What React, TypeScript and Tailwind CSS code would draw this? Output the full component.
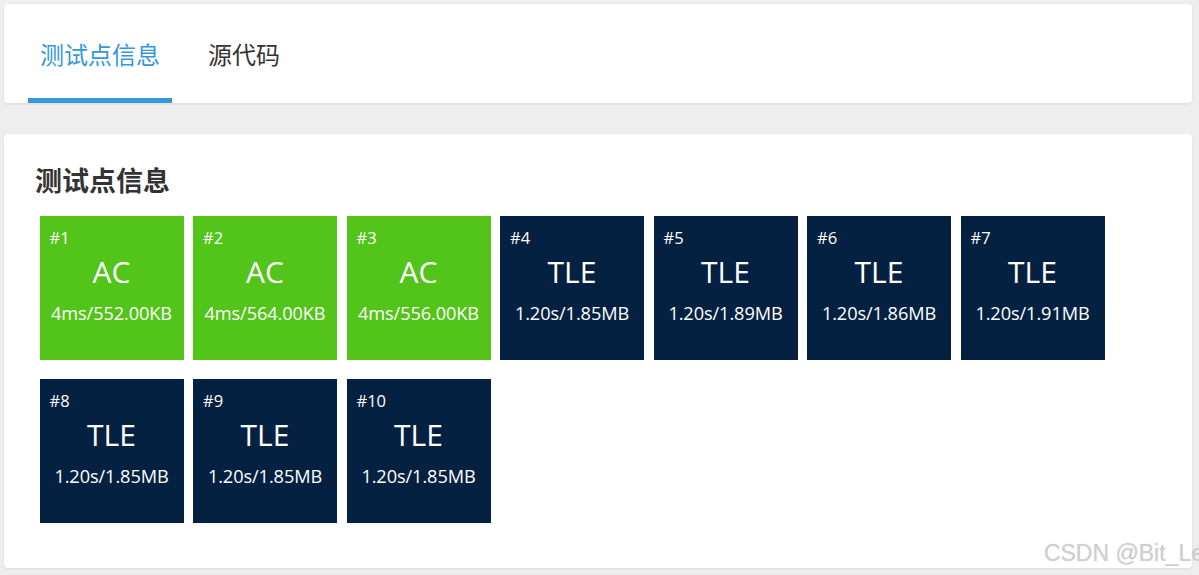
const cases = [
  { id: 1, status: 'AC', info: '4ms/552.00KB' },
  { id: 2, status: 'AC', info: '4ms/564.00KB' },
  { id: 3, status: 'AC', info: '4ms/556.00KB' },
  { id: 4, status: 'TLE', info: '1.20s/1.85MB' },
  { id: 5, status: 'TLE', info: '1.20s/1.89MB' },
  { id: 6, status: 'TLE', info: '1.20s/1.86MB' },
  { id: 7, status: 'TLE', info: '1.20s/1.91MB' },
  { id: 8, status: 'TLE', info: '1.20s/1.85MB' },
  { id: 9, status: 'TLE', info: '1.20s/1.85MB' },
  { id: 10, status: 'TLE', info: '1.20s/1.85MB' },
]

const font = { fontFamily: '"Open Sans", "Noto Sans CJK SC", sans-serif' }

function CaseBox({ id, status, info }: { id: number; status: string; info: string }) {
  return (
    <div
      className={
        'flex h-[144px] w-[144px] flex-col text-white ' +
        (status === 'AC' ? 'bg-[#52c41a]' : 'bg-[#052142]')
      }
    >
      <div className="pl-[10px] pt-[12px] text-[16.5px] leading-[20px]">#{id}</div>
      <div className="mt-[7px] text-center text-[30px] leading-[34px]">{status}</div>
      <div className="mt-[13px] text-center text-[18.2px] leading-[22px] tracking-[-0.1px]">{info}</div>
    </div>
  )
}

export default function App() {
  return (
    <div className="relative h-[575px] w-[1199px] overflow-hidden bg-[#eeeeee] p-[4px] pr-[7px]" style={font}>
      <div className="h-[99px] rounded-[4px] bg-white px-[24px] shadow-[0_1px_3px_rgba(0,0,0,0.08)]">
        <div className="flex h-full items-end">
          <div className="flex h-full flex-col justify-end">
            <div className="px-[12px] pb-[28px] text-[24px] leading-[32px] text-[#3498db]" style={{ fontFamily: '"Noto Sans CJK SC", sans-serif' }}>
              测试点信息
            </div>
            <div className="h-[5px] bg-[#3498db]" />
          </div>
          <div className="flex h-full flex-col justify-end">
            <div className="px-[36px] pb-[33px] text-[24px] leading-[32px] text-[#333333]" style={{ fontFamily: '"Noto Sans CJK SC", sans-serif' }}>
              源代码
            </div>
          </div>
        </div>
      </div>

      <div className="mt-[31px] h-[434px] rounded-[4px] bg-white px-[31px] pt-[28px] shadow-[0_1px_3px_rgba(0,0,0,0.08)]">
        <h2 className="text-[27px] font-bold leading-[36px] text-[#333333]" style={{ fontFamily: '"Noto Sans CJK SC", sans-serif' }}>
          测试点信息
        </h2>
        <div className="mt-[18px] flex w-[1080px] flex-wrap gap-x-[9.5px] gap-y-[19px] pl-[4.5px]">
          {cases.map((c) => (
            <CaseBox key={c.id} {...c} />
          ))}
        </div>
      </div>

      <div
        className="absolute bottom-[9px] right-[-5px] text-[23px] leading-[26px] text-[#cfcfcf] [text-shadow:0_0_1px_rgba(0,0,0,0.15)]"
        style={{ fontFamily: '"Liberation Sans", sans-serif' }}
      >
        CSDN @Bit_Le
      </div>
    </div>
  )
}
